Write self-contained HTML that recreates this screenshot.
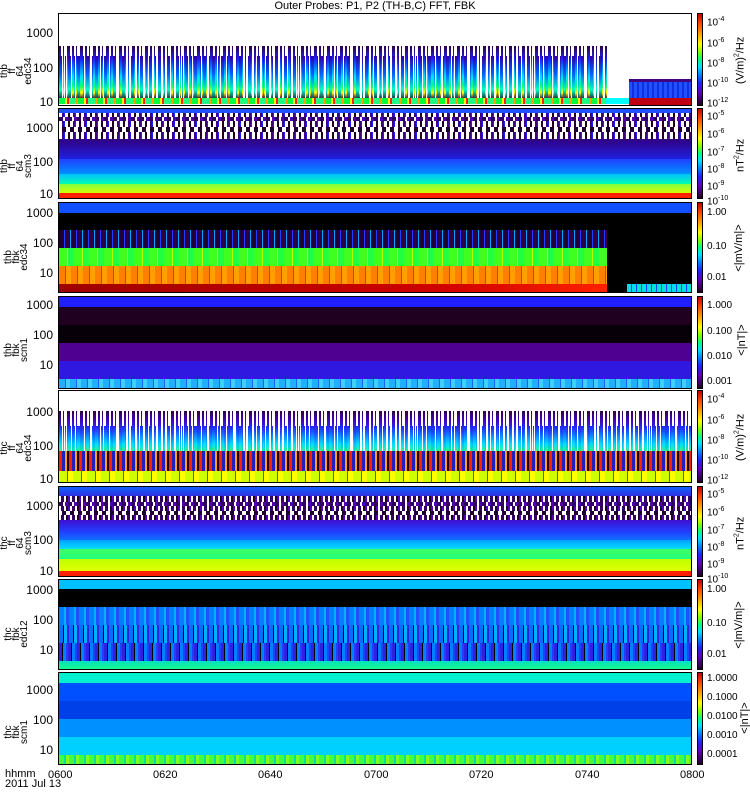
<!DOCTYPE html>
<html><head><meta charset="utf-8">
<style>
body{margin:0;background:#fff;width:750px;height:800px;overflow:hidden;position:relative;font-family:"Liberation Sans",sans-serif;color:#000}
.p{position:absolute;left:58px;width:634px;border:1px solid #000;box-sizing:border-box;overflow:hidden;background:#fff}
.b{position:absolute;left:0;width:100%}
.sp{-webkit-mask-image:repeating-linear-gradient(90deg,#000 0 2px,transparent 2px 4px,#000 4px 5px,transparent 5px 8px,#000 8px 11px,transparent 11px 13px);}
.sp2{-webkit-mask-image:repeating-linear-gradient(90deg,#000 0 3px,transparent 3px 6px,#000 6px 7px,transparent 7px 9px);}
.cb{position:absolute;left:697px;width:6px;border:1px solid #000;box-sizing:border-box;background:linear-gradient(180deg,#c00000,#ff4000 10%,#ffa000 22%,#ffff00 33%,#80ff00 42%,#00ff80 50%,#00e0ff 58%,#0080ff 67%,#2020ff 76%,#6000c0 86%,#200020 100%)}
.yl{position:absolute;font-size:12px;text-align:right;width:50px;left:3px;line-height:12px}
.rl{position:absolute;left:707px;font-size:10px;line-height:11px}
.unit{position:absolute;font-size:11px;line-height:12px;width:90px;text-align:center;transform:rotate(-90deg);white-space:nowrap;transform-origin:center}
.nm{position:absolute;left:-18px;width:70px;font-size:10px;line-height:8px;text-align:center;transform:rotate(-90deg)}
.tx{position:absolute;top:780px;font-size:11px}
</style></head><body>
<div style="position:absolute;left:0;width:750px;top:0;text-align:center;font-size:11px;line-height:12px">Outer Probes: P1, P2 (TH-B,C) FFT, FBK</div>

<!-- P1 -->
<div class="p" style="top:13px;height:93px">
 <div class="b sp" style="top:32px;height:53px;width:548px;background:linear-gradient(180deg,#300040 0%,#2020ff 25%,#0080ff 40%,#00e0ff 58%,#00ff80 75%,#ffff00 88%,#300040 100%)"></div>
 <div class="b sp2" style="top:42px;height:45px;width:548px;background:linear-gradient(180deg,#3000a0,#0060ff 40%,#00ffc0 75%,#200020)"></div>
 <div class="b" style="top:84px;height:6px;width:548px;background:repeating-linear-gradient(90deg,#00ff40 0 6px,#ffff00 6px 8px,#ff2000 8px 10px,#20ff80 10px 17px,#ffa000 17px 19px)"></div>
 <div class="b" style="top:84px;height:6px;left:547px;width:24px;background:#00ffff"></div>
 <div class="b" style="top:65px;height:3px;left:570px;width:64px;background:#400080"></div>
 <div class="b" style="top:68px;height:16px;left:570px;width:64px;background:repeating-linear-gradient(90deg,#2050ff 0 3px,#1030e0 3px 5px)"></div>
 <div class="b" style="top:84px;height:7px;left:570px;width:64px;background:#c00010"></div>
</div>
<div class="cb" style="top:13px;height:93px"></div>
<div class="yl" style="top:27px">1000</div><div class="yl" style="top:62px">100</div><div class="yl" style="top:96px">10</div>
<div class="nm" style="top:55px">thb<br>ff<br>64<br>edc34</div>
<div class="rl" style="top:14px">10<sup style="font-size:7px">-4</sup></div><div class="rl" style="top:35px">10<sup style="font-size:7px">-6</sup></div><div class="rl" style="top:55px">10<sup style="font-size:7px">-8</sup></div><div class="rl" style="top:75px">10<sup style="font-size:7px">-10</sup></div><div class="rl" style="top:95px">10<sup style="font-size:7px">-12</sup></div>
<div class="unit" style="left:694px;top:53px">(V/m)<sup style="font-size:7px">2</sup>/Hz</div>

<!-- P2 -->
<div class="p" style="top:108px;height:91px">
 <div class="b" style="top:0;height:30px;background:repeating-linear-gradient(90deg,#fff 0 3px,#400080 3px 5px,#2020ff 5px 6px,#fff 6px 9px,#200020 9px 11px)"></div>
 <div class="b" style="top:8px;height:4px;background:repeating-linear-gradient(90deg,#300060 0 4px,#fff 4px 6px,#5000b0 6px 9px)"></div>
 <div class="b" style="top:18px;height:5px;background:repeating-linear-gradient(90deg,#fff 0 3px,#200030 3px 7px,#fff 7px 8px)"></div>
 <div class="b" style="top:0;height:4px;background:#2050ff"></div>
 <div class="b" style="top:30px;height:20px;background:linear-gradient(180deg,#300080,#2020e0)"></div>
 <div class="b" style="top:50px;height:15px;background:linear-gradient(180deg,#2040ff,#0090ff)"></div>
 <div class="b" style="top:65px;height:10px;background:linear-gradient(180deg,#00c0ff,#00ffb0)"></div>
 <div class="b" style="top:75px;height:10px;background:linear-gradient(180deg,#80ff40,#e0ff00)"></div>
 <div class="b" style="top:84px;height:7px;background:#ff2000"></div>
</div>
<div class="cb" style="top:108px;height:91px"></div>
<div class="yl" style="top:122px">1000</div><div class="yl" style="top:156px">100</div><div class="yl" style="top:188px">10</div>
<div class="nm" style="top:150px">thb<br>ff<br>64<br>scm3</div>
<div class="rl" style="top:108px">10<sup style="font-size:7px">-5</sup></div><div class="rl" style="top:126px">10<sup style="font-size:7px">-6</sup></div><div class="rl" style="top:144px">10<sup style="font-size:7px">-7</sup></div><div class="rl" style="top:161px">10<sup style="font-size:7px">-8</sup></div><div class="rl" style="top:178px">10<sup style="font-size:7px">-9</sup></div><div class="rl" style="top:193px">10<sup style="font-size:7px">-10</sup></div>
<div class="unit" style="left:694px;top:148px">nT<sup style="font-size:7px">2</sup>/Hz</div>

<!-- P3 -->
<div class="p" style="top:202px;height:91px;background:#000">
 <div class="b" style="top:0;height:10px;background:#1050ff"></div>
 <div class="b" style="top:27px;height:18px;width:548px;background:repeating-linear-gradient(90deg,#200030 0 5px,#2040ff 5px 6px,#300040 6px 11px,#00a0ff 11px 12px)"></div>
 <div class="b" style="top:45px;height:19px;width:548px;background:repeating-linear-gradient(90deg,#40ff20 0 8px,#c0ff00 8px 9px,#20ff40 9px 15px)"></div>
 <div class="b" style="top:63px;height:18px;width:548px;background:repeating-linear-gradient(90deg,#ff8000 0 6px,#ff3000 6px 7px,#ffa000 7px 12px)"></div>
 <div class="b" style="top:81px;height:10px;width:548px;background:linear-gradient(90deg,#a00000,#d00000 70%,#ff2000)"></div>
 <div class="b" style="top:81px;height:10px;left:568px;width:66px;background:repeating-linear-gradient(90deg,#00e0e0 0 4px,#2040ff 4px 5px)"></div>
</div>
<div class="cb" style="top:202px;height:91px"></div>
<div class="yl" style="top:207px">1000</div><div class="yl" style="top:237px">100</div><div class="yl" style="top:267px">10</div>
<div class="nm" style="top:245px">thb<br>fbk<br>edc34</div>
<div class="rl" style="top:207px">1.00</div><div class="rl" style="top:241px">0.10</div><div class="rl" style="top:272px">0.01</div>
<div class="unit" style="left:694px;top:242px">&lt;|mV/m|&gt;</div>

<!-- P4 -->
<div class="p" style="top:296px;height:93px;background:#000">
 <div class="b" style="top:0;height:10px;background:#2020ff"></div>
 <div class="b" style="top:10px;height:18px;background:#200020"></div>
 <div class="b" style="top:28px;height:18px;background:#080008"></div>
 <div class="b" style="top:46px;height:18px;background:#500090"></div>
 <div class="b" style="top:64px;height:18px;background:#3018e0"></div>
 <div class="b" style="top:82px;height:11px;background:repeating-linear-gradient(90deg,#20b0ff 0 6px,#2060ff 6px 7px,#40d0ff 7px 11px)"></div>
</div>
<div class="cb" style="top:296px;height:93px"></div>
<div class="yl" style="top:299px">1000</div><div class="yl" style="top:329px">100</div><div class="yl" style="top:359px">10</div>
<div class="nm" style="top:338px">thb<br>fbk<br>scm1</div>
<div class="rl" style="top:300px">1.000</div><div class="rl" style="top:326px">0.100</div><div class="rl" style="top:351px">0.010</div><div class="rl" style="top:376px">0.001</div>
<div class="unit" style="left:697px;top:334px">&lt;|nT|&gt;</div>

<!-- P5 -->
<div class="p" style="top:390px;height:93px">
 <div class="b sp" style="top:20px;height:60px;background:linear-gradient(180deg,#300040 0%,#4000c0 15%,#2040ff 35%,#00c0ff 55%,#00ff80 70%,#ffff00 85%,#ff2000 100%)"></div>
 <div class="b sp2" style="top:35px;height:45px;background:linear-gradient(180deg,#2020ff,#00e0ff 40%,#80ff00 75%,#200020)"></div>
 <div class="b" style="top:60px;height:20px;background:repeating-linear-gradient(90deg,#ff2000 0 3px,#2020c0 3px 6px,#ffa000 6px 8px,#200020 8px 10px)"></div>
 <div class="b" style="top:80px;height:13px;background:repeating-linear-gradient(90deg,#d0ff00 0 8px,#ff2000 8px 9px,#ffff00 9px 14px)"></div>
</div>
<div class="cb" style="top:390px;height:93px"></div>
<div class="yl" style="top:406px">1000</div><div class="yl" style="top:440px">100</div><div class="yl" style="top:473px">10</div>
<div class="nm" style="top:432px">thc<br>ff<br>64<br>edc34</div>
<div class="rl" style="top:391px">10<sup style="font-size:7px">-4</sup></div><div class="rl" style="top:412px">10<sup style="font-size:7px">-6</sup></div><div class="rl" style="top:432px">10<sup style="font-size:7px">-8</sup></div><div class="rl" style="top:452px">10<sup style="font-size:7px">-10</sup></div><div class="rl" style="top:472px">10<sup style="font-size:7px">-12</sup></div>
<div class="unit" style="left:694px;top:430px">(V/m)<sup style="font-size:7px">2</sup>/Hz</div>

<!-- P6 -->
<div class="p" style="top:486px;height:91px">
 <div class="b" style="top:0;height:9px;background:linear-gradient(180deg,#1060ff,#3030e0)"></div>
 <div class="b" style="top:9px;height:24px;background:repeating-linear-gradient(90deg,#fff 0 2px,#300060 2px 5px,#fff 5px 7px,#200020 7px 9px,#5000c0 9px 11px)"></div>
 <div class="b" style="top:15px;height:4px;background:repeating-linear-gradient(90deg,#300060 0 4px,#fff 4px 6px,#5000b0 6px 9px)"></div>
 <div class="b" style="top:24px;height:4px;background:repeating-linear-gradient(90deg,#fff 0 3px,#200030 3px 7px,#fff 7px 8px)"></div>
 <div class="b" style="top:33px;height:20px;background:linear-gradient(180deg,#4010d0,#2040ff 60%,#1070ff)"></div>
 <div class="b" style="top:53px;height:9px;background:linear-gradient(180deg,#00a0ff,#00e0ff)"></div>
 <div class="b" style="top:62px;height:10px;background:linear-gradient(180deg,#40ff60,#20ff80)"></div>
 <div class="b" style="top:72px;height:12px;background:linear-gradient(180deg,#c0ff00,#e0ff00)"></div>
 <div class="b" style="top:84px;height:7px;background:#ff2000"></div>
</div>
<div class="cb" style="top:486px;height:91px"></div>
<div class="yl" style="top:500px">1000</div><div class="yl" style="top:534px">100</div><div class="yl" style="top:565px">10</div>
<div class="nm" style="top:527px">thc<br>ff<br>64<br>scm3</div>
<div class="rl" style="top:486px">10<sup style="font-size:7px">-5</sup></div><div class="rl" style="top:504px">10<sup style="font-size:7px">-6</sup></div><div class="rl" style="top:522px">10<sup style="font-size:7px">-7</sup></div><div class="rl" style="top:539px">10<sup style="font-size:7px">-8</sup></div><div class="rl" style="top:556px">10<sup style="font-size:7px">-9</sup></div><div class="rl" style="top:571px">10<sup style="font-size:7px">-10</sup></div>
<div class="unit" style="left:694px;top:526px">nT<sup style="font-size:7px">2</sup>/Hz</div>

<!-- P7 -->
<div class="p" style="top:579px;height:91px;background:#000">
 <div class="b" style="top:0;height:9px;background:#00c0ff"></div>
 <div class="b" style="top:27px;height:18px;background:repeating-linear-gradient(90deg,#0080ff 0 5px,#00b0ff 5px 7px,#2050ff 7px 10px)"></div>
 <div class="b" style="top:45px;height:18px;background:repeating-linear-gradient(90deg,#0070ff 0 4px,#000 4px 5px,#00b0ff 5px 8px,#3020e0 8px 10px)"></div>
 <div class="b" style="top:63px;height:18px;background:repeating-linear-gradient(90deg,#3020e0 0 3px,#000 3px 4px,#0080ff 4px 7px,#2040ff 7px 9px)"></div>
 <div class="b" style="top:81px;height:10px;background:linear-gradient(180deg,#00e0c0,#20ff80)"></div>
</div>
<div class="cb" style="top:579px;height:91px"></div>
<div class="yl" style="top:584px">1000</div><div class="yl" style="top:614px">100</div><div class="yl" style="top:644px">10</div>
<div class="nm" style="top:622px">thc<br>fbk<br>edc12</div>
<div class="rl" style="top:584px">1.00</div><div class="rl" style="top:618px">0.10</div><div class="rl" style="top:649px">0.01</div>
<div class="unit" style="left:694px;top:619px">&lt;|mV/m|&gt;</div>

<!-- P8 -->
<div class="p" style="top:672px;height:93px">
 <div class="b" style="top:0;height:10px;background:#00f0d0"></div>
 <div class="b" style="top:10px;height:18px;background:#0050ff"></div>
 <div class="b" style="top:28px;height:18px;background:#0040e8"></div>
 <div class="b" style="top:46px;height:18px;background:#0090ff"></div>
 <div class="b" style="top:64px;height:18px;background:#00d0ff"></div>
 <div class="b" style="top:82px;height:11px;background:repeating-linear-gradient(90deg,#40ff40 0 5px,#00e0a0 5px 7px,#80ff20 7px 10px)"></div>
</div>
<div class="cb" style="top:672px;height:93px"></div>
<div class="yl" style="top:684px">1000</div><div class="yl" style="top:714px">100</div><div class="yl" style="top:744px">10</div>
<div class="nm" style="top:720px">thc<br>fbk<br>scm1</div>
<div class="rl" style="top:673px">1.0000</div><div class="rl" style="top:692px">0.1000</div><div class="rl" style="top:711px">0.0100</div><div class="rl" style="top:730px">0.0010</div><div class="rl" style="top:749px">0.0001</div>
<div class="unit" style="left:700px;top:712px">&lt;|nT|&gt;</div>

<div class="tx" style="left:48px;top:769px">0600</div>
<div class="tx" style="left:153px;top:769px">0620</div>
<div class="tx" style="left:258px;top:769px">0640</div>
<div class="tx" style="left:364px;top:769px">0700</div>
<div class="tx" style="left:469px;top:769px">0720</div>
<div class="tx" style="left:575px;top:769px">0740</div>
<div class="tx" style="left:680px;top:769px">0800</div>
<div style="position:absolute;left:5px;top:769px;font-size:11px;line-height:10px">hhmm<br>2011 Jul 13</div>
</body></html>
